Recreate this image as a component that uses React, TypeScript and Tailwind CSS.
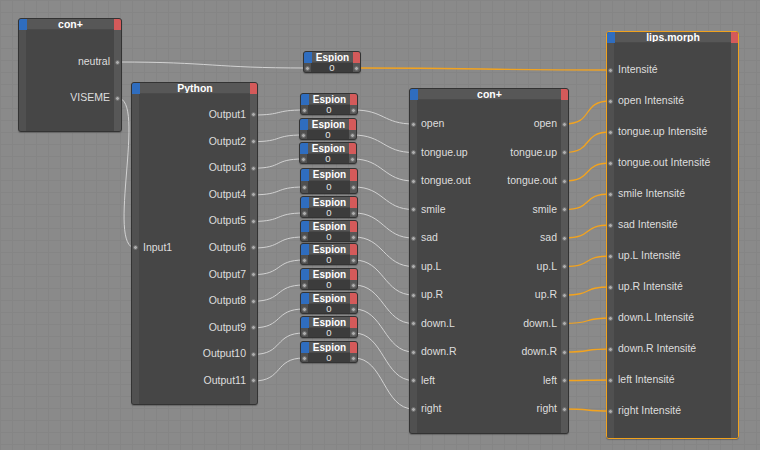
import React from "react";

type Row = { l?: string; r?: string; lp?: boolean; rp?: boolean };
type NodeDef = {
  x: number; y: number; w: number; title: string;
  first: number; rowH: number; rows: Row[]; orange?: boolean;
  pos: string; rowCls: string; padCls: string;
};

const con1: NodeDef = {
  x: 18, y: 18, w: 104, title: "con+", first: 62, rowH: 36,
  pos: "left-[18px] top-[18px] w-[104px] h-[114px]", rowCls: "h-[36px]", padCls: "pt-[14px]",
  rows: [{ r: "neutral", rp: true }, { r: "VISEME", rp: true }],
};

const pyRows: Row[] = Array.from({ length: 11 }, (_, i) => ({
  r: `Output${i + 1}`, rp: true,
  ...(i === 5 ? { l: "Input1", lp: true } : {}),
}));
const python: NodeDef = {
  x: 131, y: 82, w: 127, title: "Python", first: 115, rowH: 26.6, rows: pyRows,
  pos: "left-[131px] top-[82px] w-[127px] h-[323px]", rowCls: "h-[26.6px]", padCls: "pt-[7.7px]",
};

const names = ["open", "tongue.up", "tongue.out", "smile", "sad", "up.L", "up.R", "down.L", "down.R", "left", "right"];
const conMid: NodeDef = {
  x: 409, y: 88, w: 160, title: "con+", first: 124, rowH: 28.5,
  pos: "left-[409px] top-[88px] w-[160px] h-[346px]", rowCls: "h-[28.5px]", padCls: "pt-[9.75px]",
  rows: names.map((n) => ({ l: n, r: n, lp: true, rp: true })),
};

const lips: NodeDef = {
  x: 606, y: 31, w: 133, title: "lips.morph", first: 70, rowH: 31, orange: true,
  pos: "left-[606px] top-[31px] w-[133px] h-[408px]", rowCls: "h-[31px]", padCls: "pt-[11.5px]",
  rows: [{ l: "Intensité", lp: true }, ...names.map((n) => ({ l: `${n} Intensité`, lp: true }))],
};

type Esp = { x: number; y: number; big?: boolean; pos: string };
const espions: Esp[] = [
  { x: 303, y: 51, pos: "left-[303px] top-[51px]" },
  { x: 300, y: 93, pos: "left-[300px] top-[93px]" },
  { x: 299, y: 118, pos: "left-[299px] top-[118px]" },
  { x: 299, y: 142, pos: "left-[299px] top-[142px]" },
  { x: 300, y: 168, big: true, pos: "left-[300px] top-[168px]" },
  { x: 300, y: 196, pos: "left-[300px] top-[196px]" },
  { x: 300, y: 220, pos: "left-[300px] top-[220px]" },
  { x: 300, y: 243, pos: "left-[300px] top-[243px]" },
  { x: 300, y: 268, pos: "left-[300px] top-[268px]" },
  { x: 300, y: 292, pos: "left-[300px] top-[292px]" },
  { x: 300, y: 316, pos: "left-[300px] top-[316px]" },
  { x: 300, y: 341, pos: "left-[300px] top-[341px]" },
];
const ESP_W = 58;
const espValY = (e: Esp) => e.y + 1 + (e.big ? 12 : 11) + (e.big ? 6 : 5);

const rowY = (n: NodeDef, i: number) => n.first + i * n.rowH;
const leftX = (n: NodeDef) => n.x + 4.5;
const rightX = (n: NodeDef) => n.x + n.w - 4.5;

type Wire = { x1: number; y1: number; x2: number; y2: number; orange?: boolean };
const wires: Wire[] = [];
wires.push({ x1: rightX(con1), y1: rowY(con1, 0), x2: espions[0].x + 4, y2: espValY(espions[0]) });
wires.push({ x1: espions[0].x + ESP_W - 4, y1: espValY(espions[0]), x2: leftX(lips), y2: rowY(lips, 0), orange: true });
wires.push({ x1: rightX(con1), y1: rowY(con1, 1), x2: leftX(python), y2: rowY(python, 5) });
for (let i = 0; i < 11; i++) {
  const e = espions[i + 1];
  wires.push({ x1: rightX(python), y1: rowY(python, i), x2: e.x + 4, y2: espValY(e) });
  wires.push({ x1: e.x + ESP_W - 4, y1: espValY(e), x2: leftX(conMid), y2: rowY(conMid, i) });
  wires.push({ x1: rightX(conMid), y1: rowY(conMid, i), x2: leftX(lips), y2: rowY(lips, i + 1), orange: true });
}

function wirePath(w: Wire) {
  const d = Math.max(30, (w.x2 - w.x1) / 2);
  return `M ${w.x1} ${w.y1} C ${w.x1 + d} ${w.y1}, ${w.x2 - d} ${w.y2}, ${w.x2} ${w.y2}`;
}

function Dot() {
  return <div className="h-[5px] w-[5px] rounded-full border border-[#6a6a6a] bg-[#adadad]" />;
}

function TitleBar({ title, big, esp }: { title: string; big?: boolean; esp?: boolean }) {
  const h = big ? "h-[12px] leading-[12px]" : "h-[11px] leading-[11px]";
  const t = esp ? "text-[10px]" : "text-[10.5px]";
  return (
    <div className={`flex shrink-0 ${h}`}>
      <div className="w-[8px] bg-[#2f6dbf]" />
      <div className={`flex-1 overflow-hidden border-b border-[#4a4a4a] bg-[#575757] text-center font-bold text-white ${t}`}>
        {title}
      </div>
      <div className="w-[7px] bg-[#d45a5a]" />
    </div>
  );
}

function Node({ n }: { n: NodeDef }) {
  return (
    <div
      className={`absolute flex flex-col overflow-hidden rounded-[3px] border bg-[#464646] shadow-[0_1px_1px_rgba(0,0,0,0.25)] ${n.pos} ${n.orange ? "border-[#f0a21e]" : "border-[#333333]"}`}
    >
      <TitleBar title={n.title} />
      <div className="flex flex-1">
        <div className={`flex w-[7px] flex-col bg-[#505050] ${n.padCls}`}>
          {n.rows.map((r, i) => (
            <div key={i} className={`flex items-center justify-center ${n.rowCls}`}>
              {r.lp && <Dot />}
            </div>
          ))}
        </div>
        <div className={`flex flex-1 flex-col text-[10.5px] text-[#dedede] ${n.padCls}`}>
          {n.rows.map((r, i) => (
            <div key={i} className={`flex items-center justify-between whitespace-nowrap px-[4px] ${n.rowCls}`}>
              <span>{r.l ?? ""}</span>
              <span>{r.r ?? ""}</span>
            </div>
          ))}
        </div>
        <div className={`flex w-[7px] flex-col bg-[#575757] ${n.padCls}`}>
          {n.rows.map((r, i) => (
            <div key={i} className={`flex items-center justify-center ${n.rowCls}`}>
              {r.rp && <Dot />}
            </div>
          ))}
        </div>
      </div>
    </div>
  );
}

function Espion({ e }: { e: Esp }) {
  const size = e.big ? "h-[26px]" : "h-[22px]";
  const vh = e.big ? "h-[12px] leading-[12px]" : "h-[10px] leading-[10px]";
  return (
    <div
      className={`absolute flex w-[58px] flex-col overflow-hidden rounded-[3px] border border-[#333333] bg-[#3e3e3e] shadow-[0_1px_1px_rgba(0,0,0,0.25)] ${size} ${e.pos}`}
    >
      <TitleBar title="Espion" big={e.big} esp />
      <div className={`flex ${vh}`}>
        <div className="flex w-[7px] items-center justify-center bg-[#505050]">
          <Dot />
        </div>
        <div className="flex-1 overflow-hidden bg-[#3c3c3c] text-center text-[9.5px] text-[#e6e6e6]">0</div>
        <div className="flex w-[7px] items-center justify-center bg-[#575757]">
          <Dot />
        </div>
      </div>
    </div>
  );
}

export default function App() {
  return (
    <div className="relative h-[450px] w-[760px] overflow-hidden bg-[#8a8a8a] bg-[linear-gradient(to_right,#858585_1px,transparent_1px),linear-gradient(to_bottom,#858585_1px,transparent_1px)] bg-size-[12px_12px] font-['Liberation_Sans','DejaVu_Sans',sans-serif]">
      <svg className="absolute left-0 top-0" width={760} height={450}>
        {wires.map((w, i) => (
          <path
            key={i}
            d={wirePath(w)}
            fill="none"
            stroke={w.orange ? "#f2a31f" : "#d2d2d2"}
            strokeWidth={w.orange ? 1.3 : 1}
          />
        ))}
      </svg>
      <Node n={con1} />
      <Node n={python} />
      <Node n={conMid} />
      <Node n={lips} />
      {espions.map((e, i) => (
        <Espion key={i} e={e} />
      ))}
    </div>
  );
}
